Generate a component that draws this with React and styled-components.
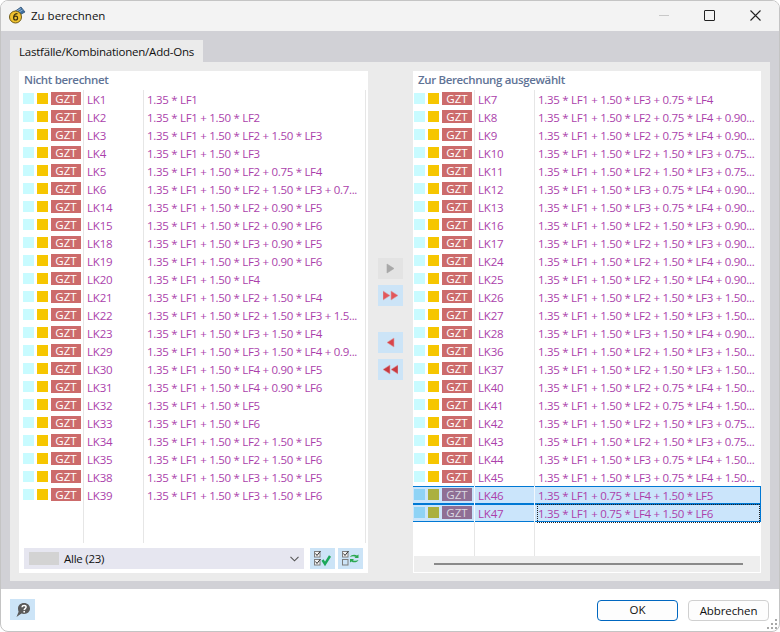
import React from 'react'
import styled, { createGlobalStyle } from 'styled-components'

const notCalculated = [
  ['LK1', '1.35 * LF1'],
  ['LK2', '1.35 * LF1 + 1.50 * LF2'],
  ['LK3', '1.35 * LF1 + 1.50 * LF2 + 1.50 * LF3'],
  ['LK4', '1.35 * LF1 + 1.50 * LF3'],
  ['LK5', '1.35 * LF1 + 1.50 * LF2 + 0.75 * LF4'],
  ['LK6', '1.35 * LF1 + 1.50 * LF2 + 1.50 * LF3 + 0.7...'],
  ['LK14', '1.35 * LF1 + 1.50 * LF2 + 0.90 * LF5'],
  ['LK15', '1.35 * LF1 + 1.50 * LF2 + 0.90 * LF6'],
  ['LK18', '1.35 * LF1 + 1.50 * LF3 + 0.90 * LF5'],
  ['LK19', '1.35 * LF1 + 1.50 * LF3 + 0.90 * LF6'],
  ['LK20', '1.35 * LF1 + 1.50 * LF4'],
  ['LK21', '1.35 * LF1 + 1.50 * LF2 + 1.50 * LF4'],
  ['LK22', '1.35 * LF1 + 1.50 * LF2 + 1.50 * LF3 + 1.5...'],
  ['LK23', '1.35 * LF1 + 1.50 * LF3 + 1.50 * LF4'],
  ['LK29', '1.35 * LF1 + 1.50 * LF3 + 1.50 * LF4 + 0.9...'],
  ['LK30', '1.35 * LF1 + 1.50 * LF4 + 0.90 * LF5'],
  ['LK31', '1.35 * LF1 + 1.50 * LF4 + 0.90 * LF6'],
  ['LK32', '1.35 * LF1 + 1.50 * LF5'],
  ['LK33', '1.35 * LF1 + 1.50 * LF6'],
  ['LK34', '1.35 * LF1 + 1.50 * LF2 + 1.50 * LF5'],
  ['LK35', '1.35 * LF1 + 1.50 * LF2 + 1.50 * LF6'],
  ['LK38', '1.35 * LF1 + 1.50 * LF3 + 1.50 * LF5'],
  ['LK39', '1.35 * LF1 + 1.50 * LF3 + 1.50 * LF6'],
]

const selectedForCalc = [
  ['LK7', '1.35 * LF1 + 1.50 * LF3 + 0.75 * LF4'],
  ['LK8', '1.35 * LF1 + 1.50 * LF2 + 0.75 * LF4 + 0.90...'],
  ['LK9', '1.35 * LF1 + 1.50 * LF2 + 0.75 * LF4 + 0.90...'],
  ['LK10', '1.35 * LF1 + 1.50 * LF2 + 1.50 * LF3 + 0.75...'],
  ['LK11', '1.35 * LF1 + 1.50 * LF2 + 1.50 * LF3 + 0.75...'],
  ['LK12', '1.35 * LF1 + 1.50 * LF3 + 0.75 * LF4 + 0.90...'],
  ['LK13', '1.35 * LF1 + 1.50 * LF3 + 0.75 * LF4 + 0.90...'],
  ['LK16', '1.35 * LF1 + 1.50 * LF2 + 1.50 * LF3 + 0.90...'],
  ['LK17', '1.35 * LF1 + 1.50 * LF2 + 1.50 * LF3 + 0.90...'],
  ['LK24', '1.35 * LF1 + 1.50 * LF2 + 1.50 * LF4 + 0.90...'],
  ['LK25', '1.35 * LF1 + 1.50 * LF2 + 1.50 * LF4 + 0.90...'],
  ['LK26', '1.35 * LF1 + 1.50 * LF2 + 1.50 * LF3 + 1.50...'],
  ['LK27', '1.35 * LF1 + 1.50 * LF2 + 1.50 * LF3 + 1.50...'],
  ['LK28', '1.35 * LF1 + 1.50 * LF3 + 1.50 * LF4 + 0.90...'],
  ['LK36', '1.35 * LF1 + 1.50 * LF2 + 1.50 * LF3 + 1.50...'],
  ['LK37', '1.35 * LF1 + 1.50 * LF2 + 1.50 * LF3 + 1.50...'],
  ['LK40', '1.35 * LF1 + 1.50 * LF2 + 0.75 * LF4 + 1.50...'],
  ['LK41', '1.35 * LF1 + 1.50 * LF2 + 0.75 * LF4 + 1.50...'],
  ['LK42', '1.35 * LF1 + 1.50 * LF2 + 1.50 * LF3 + 0.75...'],
  ['LK43', '1.35 * LF1 + 1.50 * LF2 + 1.50 * LF3 + 0.75...'],
  ['LK44', '1.35 * LF1 + 1.50 * LF3 + 0.75 * LF4 + 1.50...'],
  ['LK45', '1.35 * LF1 + 1.50 * LF3 + 0.75 * LF4 + 1.50...'],
  ['LK46', '1.35 * LF1 + 0.75 * LF4 + 1.50 * LF5', true],
  ['LK47', '1.35 * LF1 + 0.75 * LF4 + 1.50 * LF6', true, true],
]

const AppIcon = () => (
  <svg width="18" height="18" viewBox="0 0 18 18">
    <path d="M6 6 L13 1 L17 6 L10 10 Z" fill="#3f6f9f" stroke="#24476b" strokeWidth="0.7" />
    <path d="M8 5.5 L13 2.5 M9.5 7 L14.5 4" stroke="#a9c8e4" strokeWidth="0.8" />
    <circle cx="7.5" cy="11" r="6" fill="#f0c22e" stroke="#6f5a14" strokeWidth="1" />
    <path d="M9.5 7.6 C7 7.6 5.6 9.2 5.6 11.4 C5.6 13.2 6.5 14 7.6 14 C8.8 14 9.6 13.2 9.6 12 C9.6 10.9 8.8 10.2 7.7 10.2 C6.8 10.2 6.1 10.7 5.7 11.3" fill="none" stroke="#3b3210" strokeWidth="1.2" />
  </svg>
)

const Triangles = ({ dir, color, stroke, count }) => {
  const points = dir === 'right' ? (x) => `${x},1 ${x + 7},5.5 ${x},10` : (x) => `${x + 7},1 ${x},5.5 ${x + 7},10`
  return (
    <svg width="15" height="11" viewBox="0 0 15 11">
      {count === 2 ? (
        <>
          <polygon points={points(0)} fill={color} stroke={stroke} strokeWidth="0.6" />
          <polygon points={points(8)} fill={color} stroke={stroke} strokeWidth="0.6" />
        </>
      ) : (
        <polygon points={points(4)} fill={color} stroke={stroke} strokeWidth="0.6" />
      )}
    </svg>
  )
}

const CheckBoxIcon = ({ x, y, checked }) => (
  <>
    <rect x={x + 0.5} y={y + 0.5} width="5.5" height="5.5" fill={checked ? '#f4f4f4' : 'none'} stroke="#7d7d7d" />
    {checked && <path d={`M${x + 1.5} ${y + 2.5} L${x + 3} ${y + 4.5} L${x + 6.5} ${y}`} fill="none" stroke="#333" strokeWidth="1" />}
  </>
)

const CheckAllIcon = () => (
  <svg width="25" height="21" viewBox="0 0 25 21">
    <CheckBoxIcon x={4} y={3} checked />
    <CheckBoxIcon x={4} y={11} checked />
    <path d="M12.5 12 L15 16 L20 8" fill="none" stroke="#1aa85a" strokeWidth="2.4" />
  </svg>
)

const InvertIcon = () => (
  <svg width="25" height="21" viewBox="0 0 25 21">
    <CheckBoxIcon x={4} y={3} checked />
    <CheckBoxIcon x={4} y={11} />
    <path d="M12 9 C13 6.5 17 6 19 7.5 L20.5 6.5 L20.5 10 L16.5 10 L17.7 8.8 C16 8 14 8 12 9 Z" fill="#2aa84f" />
    <path d="M20.5 12 C19.5 14.5 15.5 15 13.5 13.5 L12 14.5 L12 11 L16 11 L14.8 12.2 C16.5 13 18.5 13 20.5 12 Z" fill="#2aa84f" />
  </svg>
)

const HelpIcon = () => (
  <svg width="16" height="16" viewBox="0 0 16 16">
    <path d="M9 1 C12.5 1 15 3.4 15 6.6 C15 9.8 12.5 12 9 12 C8 12 7.2 11.9 6.4 11.6 L1.5 15 L3.6 9.7 C3.2 8.9 3 7.8 3 6.6 C3 3.4 5.5 1 9 1 Z" fill="#5a5a5a" />
    <path d="M7 5.2 C7.1 4 8 3.4 9.1 3.4 C10.3 3.4 11.1 4.1 11.1 5.1 C11.1 6.5 9.2 6.6 9.2 8" fill="none" stroke="#fff" strokeWidth="1.5" />
    <rect x="8.4" y="8.9" width="1.6" height="1.6" fill="#fff" />
  </svg>
)

const GridDots = () => (
  <svg width="11" height="11" viewBox="0 0 11 11">
    {[[8, 0], [4, 4], [8, 4], [0, 8], [4, 8], [8, 8]].map(([x, y]) => (
      <rect key={`${x}-${y}`} x={x} y={y} width="2" height="2" fill="#a8a8a8" />
    ))}
  </svg>
)

const CaseList = ({ rows, variant }) => (
  <ListBody>
    {rows.map(([id, formula, selected, focused]) => (
      <Row key={id} $variant={variant} $selected={selected}>
        <MarkerCell $selected={selected} $variant={variant}>
          <Swatch $color={selected ? '#8fd3f5' : '#c8fbff'} />
          <Swatch $color={selected ? '#abb03f' : '#f6c600'} />
          <Badge $selected={selected}>GZT</Badge>
        </MarkerCell>
        <NameCell $selected={selected}>{id}</NameCell>
        <FormulaCell $focused={focused} $variant={variant}>{formula}</FormulaCell>
      </Row>
    ))}
    <FillerRow $variant={variant}>
      <MarkerCell $variant={variant} />
      <NameCell />
      <FormulaCell $variant={variant} />
    </FillerRow>
  </ListBody>
)

export default function App() {
  return (
    <Win>
      <GlobalStyle />
      <TitleBar>
        <AppIcon />
        <TitleText>Zu berechnen</TitleText>
        <WindowControls>
          <Minimize />
          <Maximize />
          <svg width="11" height="11" viewBox="0 0 11 11">
            <path d="M0.5 0.5 L10.5 10.5 M10.5 0.5 L0.5 10.5" stroke="#222" strokeWidth="1.1" />
          </svg>
        </WindowControls>
      </TitleBar>

      <Body>
        <Tab>Lastfälle/Kombinationen/Add-Ons</Tab>
        <TabPanel>
          <ListPanel>
            <ListTitle>Nicht berechnet</ListTitle>
            <CaseList rows={notCalculated} variant="left" />
            <FilterBar>
              <FilterSelect>
                <FilterSwatch />
                <FilterLabel>Alle (23)</FilterLabel>
                <svg width="9" height="6" viewBox="0 0 9 6">
                  <path d="M0.5 0.8 L4.5 4.8 L8.5 0.8" fill="none" stroke="#555" strokeWidth="1.1" />
                </svg>
              </FilterSelect>
              <FilterButtons>
                <IconButton><CheckAllIcon /></IconButton>
                <IconButton><InvertIcon /></IconButton>
              </FilterButtons>
            </FilterBar>
          </ListPanel>

          <MoveColumn>
            <MoveGroup>
              <IconButton $disabled><Triangles dir="right" color="#a8a8a8" stroke="#a8a8a8" count={1} /></IconButton>
              <IconButton><Triangles dir="right" color="#e2575b" stroke="#d9a0a8" count={2} /></IconButton>
            </MoveGroup>
            <MoveGroup>
              <IconButton><Triangles dir="left" color="#d9454a" stroke="#d9a0a8" count={1} /></IconButton>
              <IconButton><Triangles dir="left" color="#c93a40" stroke="#d9a0a8" count={2} /></IconButton>
            </MoveGroup>
          </MoveColumn>

          <ListPanel>
            <ListTitle>Zur Berechnung ausgewählt</ListTitle>
            <CaseList rows={selectedForCalc} variant="right" />
            <ScrollTrack>
              <ScrollThumb />
            </ScrollTrack>
          </ListPanel>
        </TabPanel>
      </Body>

      <Footer>
        <IconButton><HelpIcon /></IconButton>
        <FooterActions>
          <DialogButton $primary>OK</DialogButton>
          <DialogButton>Abbrechen</DialogButton>
        </FooterActions>
        <Grip><GridDots /></Grip>
      </Footer>
    </Win>
  )
}

const GlobalStyle = createGlobalStyle`
  html, body {
    margin: 0;
    padding: 0;
    background: #fff;
  }
  * {
    box-sizing: border-box;
  }
`

const Win = styled.div`
  width: 780px;
  height: 632px;
  display: flex;
  flex-direction: column;
  overflow: hidden;
  border: 1px solid #c4c4c4;
  border-radius: 8px;
  background: #fff;
  font-family: "Open Sans", "Noto Sans", sans-serif;
  font-size: 11.5px;
  color: #111;
`

const TitleBar = styled.div`
  height: 30px;
  flex: none;
  display: flex;
  align-items: center;
  padding: 0 0 2px 7px;
  background: #f3f3f3;
`

const TitleText = styled.span`
  margin-left: 5px;
  font-size: 11.5px;
`

const WindowControls = styled.div`
  margin-left: auto;
  display: flex;
  align-items: center;
  gap: 35px;
  padding-right: 18px;
`

const Minimize = styled.div`
  width: 10px;
  height: 1px;
  background: #c8c8c8;
`

const Maximize = styled.div`
  width: 11px;
  height: 11px;
  border: 1px solid #222;
  border-radius: 1px;
`

const Body = styled.div`
  flex: 1;
  min-height: 0;
  display: flex;
  flex-direction: column;
  padding: 9px 9px 8px;
  background: #d1d1d6;
`

const Tab = styled.div`
  width: 193px;
  height: 22px;
  padding-left: 9px;
  line-height: 24px;
  letter-spacing: -0.22px;
  white-space: nowrap;
  background: #ebebeb;
`

const TabPanel = styled.div`
  flex: 1;
  min-height: 0;
  display: grid;
  grid-template-columns: 349px 45px 348px;
  padding: 9px 9px 8px;
  background: #ebebeb;
`

const ListPanel = styled.div`
  display: flex;
  flex-direction: column;
  min-height: 0;
  background: #fff;
`

const ListTitle = styled.div`
  height: 19px;
  flex: none;
  padding-left: 5px;
  line-height: 18px;
  font-weight: 600;
  letter-spacing: -0.35px;
  color: #5f7396;
`

const ListBody = styled.div`
  flex: 1;
  min-height: 0;
  display: flex;
  flex-direction: column;
`

const Row = styled.div`
  height: 18px;
  flex: none;
  display: grid;
  grid-template-columns: ${(p) => (p.$variant === 'left' ? '65px 60px 223px' : '62px 60px 225px')};
  background: ${(p) => (p.$selected ? '#cbe5fb' : 'transparent')};
  box-shadow: ${(p) => (p.$selected ? 'inset 0 1px #0078d4, inset 0 -1px #0078d4, inset -1px 0 #0078d4' : 'none')};
`

const FillerRow = styled(Row)`
  height: auto;
  flex: 1;
`

const MarkerCell = styled.div`
  display: flex;
  align-items: flex-start;
  padding-left: ${(p) => (p.$variant === 'left' ? '4px' : '1px')};
  border-right: 1px solid ${(p) => (p.$selected ? '#f2f8fd' : '#e6e6e6')};
`

const Swatch = styled.span`
  width: 11px;
  height: 11px;
  margin: 3px 3px 0 0;
  background: ${(p) => p.$color};
`

const Badge = styled.span`
  width: 30px;
  height: 13px;
  margin-top: 2px;
  line-height: 13px;
  text-align: center;
  font-size: 11.5px;
  color: ${(p) => (p.$selected ? '#d9d9e2' : '#fff')};
  background: ${(p) => (p.$selected ? '#8f6f94' : '#cc6b6b')};
`

const NameCell = styled.div`
  padding-left: 3px;
  line-height: 19px;
  letter-spacing: -0.2px;
  color: #ab3fab;
  border-right: 1px solid ${(p) => (p.$selected ? '#f2f8fd' : '#e6e6e6')};
`

const FormulaCell = styled.div`
  padding-left: ${(p) => (p.$focused ? '1px' : '3px')};
  margin-left: ${(p) => (p.$focused ? '2px' : '0')};
  line-height: 19px;
  letter-spacing: -0.3px;
  white-space: nowrap;
  overflow: hidden;
  color: #ab3fab;
  border-right: ${(p) => (p.$variant === 'left' ? '1px solid #e6e6e6' : 'none')};
  margin-right: ${(p) => (p.$variant === 'left' ? '1px' : '0')};
  outline: ${(p) => (p.$focused ? '1px dotted #222' : 'none')};
  outline-offset: -1px;
`

const FilterBar = styled.div`
  height: 30px;
  flex: none;
  display: flex;
  padding: 5px 5px 4px;
  gap: 6px;
`

const FilterSelect = styled.div`
  width: 280px;
  display: flex;
  align-items: center;
  padding: 0 5px 0 5px;
  background: #e6e6f0;
`

const FilterSwatch = styled.span`
  width: 30px;
  height: 13px;
  background: #d3d3d3;
`

const FilterLabel = styled.span`
  flex: 1;
  margin-left: 5px;
  letter-spacing: -0.25px;
`

const FilterButtons = styled.div`
  display: flex;
  gap: 3px;
`

const IconButton = styled.div`
  width: 25px;
  height: 21px;
  display: flex;
  align-items: center;
  justify-content: center;
  background: ${(p) => (p.$disabled ? '#e3e3e3' : '#cce4f7')};
`

const MoveColumn = styled.div`
  display: flex;
  flex-direction: column;
  gap: 26px;
  padding: 187px 0 0 10px;
`

const MoveGroup = styled.div`
  display: flex;
  flex-direction: column;
  gap: 6px;
`

const ScrollTrack = styled.div`
  height: 16px;
  flex: none;
  display: flex;
  align-items: center;
  margin: 0 1px 1px;
  padding-left: 20px;
  background: #eeeeee;
`

const ScrollThumb = styled.div`
  width: 309px;
  height: 2px;
  background: #8a8a8a;
`

const Footer = styled.div`
  position: relative;
  height: 42px;
  flex: none;
  display: flex;
  align-items: flex-start;
  justify-content: space-between;
  padding: 10px 10px 0 9px;
`

const FooterActions = styled.div`
  display: flex;
  gap: 10px;
  padding-top: 1px;
`

const DialogButton = styled.div`
  width: 81px;
  height: 21px;
  line-height: ${(p) => (p.$primary ? '18px' : '19px')};
  letter-spacing: -0.1px;
  text-align: center;
  border-radius: 4px;
  border: ${(p) => (p.$primary ? '1.5px solid #0067c0' : '1px solid #d0d0d0')};
  background: #fdfdfd;
`

const Grip = styled.div`
  position: absolute;
  right: 1px;
  bottom: 1px;
  line-height: 0;
`
